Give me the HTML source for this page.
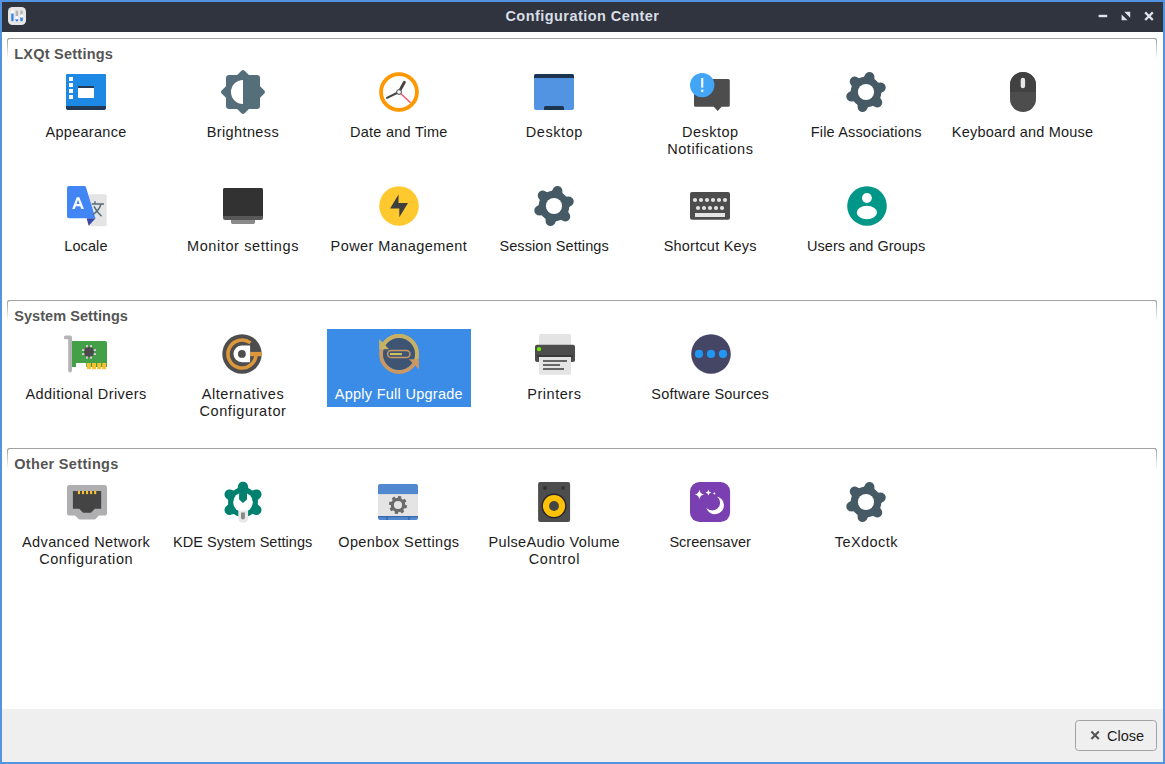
<!DOCTYPE html>
<html><head><meta charset="utf-8"><title>Configuration Center</title>
<style>
html,body{margin:0;padding:0}
body{width:1165px;height:764px;overflow:hidden;position:relative;background:#5294e2;font-family:"Liberation Sans",sans-serif;font-size:14.5px;color:#1c1c1c}
.tb{position:absolute;left:2px;top:2px;width:1161px;height:30px;background:#2f343f}
.tt{position:absolute;left:0;top:0;width:1161px;text-align:center;font-weight:bold;color:#d9dde4;line-height:29px;font-size:14.5px;white-space:nowrap}
.ct{position:absolute;left:2px;top:32px;width:1161px;height:677px;background:#fff}
.ft{position:absolute;left:2px;top:709px;width:1161px;height:53px;background:#efefef}
.gb{position:absolute;left:7px;width:1150px;height:24px;box-sizing:border-box;border-top:1px solid #a2a2a2;border-radius:3px 3px 0 0}
.gb:before,.gb:after{content:"";position:absolute;top:2px;width:1px;height:18px;background:linear-gradient(#a8a8a8,rgba(200,200,200,0))}
.gb:before{left:0}.gb:after{right:0}
.gc{position:absolute;width:3px;height:3px;box-sizing:border-box;top:-1px;border-top:1px solid #a2a2a2}
.gc.l{left:0;border-left:1px solid #a4a4a4;border-radius:3px 0 0 0}
.gc.r{right:0;border-right:1px solid #a4a4a4;border-radius:0 3px 0 0}
.hd{position:absolute;left:14.2px;font-weight:bold;color:#555;white-space:nowrap;line-height:17px;font-size:14.5px}
.lb{position:absolute;width:156px;text-align:center;line-height:17px;white-space:nowrap}
.lb span{display:block}
.sel{position:absolute;left:327px;top:329px;width:144px;height:78px;background:#3b8ce6}
.btn{position:absolute;left:1075px;top:720px;width:82px;height:31px;box-sizing:border-box;border:1px solid #a2a2a2;border-radius:3.5px;background:#efefef}
.bt{position:absolute;left:1107px;top:728px;line-height:17px;white-space:nowrap}
svg{position:absolute;left:0;top:0}
</style></head>
<body>
<div class="tb"><div class="tt" style="letter-spacing:0.45px;left:-0.07px">Configuration Center</div></div>
<div class="ct"></div><div class="ft"></div>
<div class="gb" style="top:38px"><i class="gc l"></i><i class="gc r"></i></div>
<div class="hd" style="top:46px;letter-spacing:0.24px">LXQt Settings</div>
<div class="gb" style="top:300px"><i class="gc l"></i><i class="gc r"></i></div>
<div class="hd" style="top:308px;letter-spacing:0.065px">System Settings</div>
<div class="gb" style="top:448px"><i class="gc l"></i><i class="gc r"></i></div>
<div class="hd" style="top:456px;letter-spacing:0.328px">Other Settings</div>
<div class="sel"></div>
<div class="lb" style="left:7.9px;top:124px"><span style="letter-spacing:0.3px;margin-left:0.3px">Appearance</span></div>
<div class="lb" style="left:164.7px;top:124px"><span style="letter-spacing:0.388px;margin-left:0.388px">Brightness</span></div>
<div class="lb" style="left:320.7px;top:124px"><span style="letter-spacing:0.261px;margin-left:0.261px">Date and Time</span></div>
<div class="lb" style="left:476.1px;top:124px"><span style="letter-spacing:0.585px;margin-left:0.585px">Desktop</span></div>
<div class="lb" style="left:632.1px;top:124px"><span style="letter-spacing:0.5px;margin-left:0.5px">Desktop</span><span style="letter-spacing:0.57px;margin-left:0.57px">Notifications</span></div>
<div class="lb" style="left:788.1px;top:124px"><span style="letter-spacing:0.165px;margin-left:0.165px">File Associations</span></div>
<div class="lb" style="left:944.5px;top:124px"><span style="letter-spacing:0.203px;margin-left:0.203px">Keyboard and Mouse</span></div>
<div class="lb" style="left:7.9px;top:238px"><span style="letter-spacing:0.111px;margin-left:0.111px">Locale</span></div>
<div class="lb" style="left:164.7px;top:238px"><span style="letter-spacing:0.609px;margin-left:0.609px">Monitor settings</span></div>
<div class="lb" style="left:320.7px;top:238px"><span style="letter-spacing:0.427px;margin-left:0.427px">Power Management</span></div>
<div class="lb" style="left:476.1px;top:238px"><span style="letter-spacing:0.087px;margin-left:0.087px">Session Settings</span></div>
<div class="lb" style="left:632.1px;top:238px"><span style="letter-spacing:0.218px;margin-left:0.218px">Shortcut Keys</span></div>
<div class="lb" style="left:788.1px;top:238px"><span style="letter-spacing:0.033px;margin-left:0.033px">Users and Groups</span></div>
<div class="lb" style="left:7.9px;top:386px"><span style="letter-spacing:0.42px;margin-left:0.42px">Additional Drivers</span></div>
<div class="lb" style="left:164.7px;top:386px"><span style="letter-spacing:0.57px;margin-left:0.57px">Alternatives</span><span style="letter-spacing:0.609px;margin-left:0.609px">Configurator</span></div>
<div class="lb" style="left:320.7px;top:386px;color:#fff"><span style="letter-spacing:0.271px;margin-left:0.271px">Apply Full Upgrade</span></div>
<div class="lb" style="left:476.1px;top:386px"><span style="letter-spacing:0.529px;margin-left:0.529px">Printers</span></div>
<div class="lb" style="left:632.1px;top:386px"><span style="letter-spacing:0.209px;margin-left:0.209px">Software Sources</span></div>
<div class="lb" style="left:7.9px;top:534px"><span style="letter-spacing:0.419px;margin-left:0.419px">Advanced Network</span><span style="letter-spacing:0.604px;margin-left:0.604px">Configuration</span></div>
<div class="lb" style="left:164.7px;top:534px"><span style="letter-spacing:0.031px;margin-left:0.031px">KDE System Settings</span></div>
<div class="lb" style="left:320.7px;top:534px"><span style="letter-spacing:0.37px;margin-left:0.37px">Openbox Settings</span></div>
<div class="lb" style="left:476.1px;top:534px"><span style="letter-spacing:0.332px;margin-left:0.332px">PulseAudio Volume</span><span style="letter-spacing:0.693px;margin-left:0.693px">Control</span></div>
<div class="lb" style="left:632.1px;top:534px"><span style="letter-spacing:-0.001px;margin-left:-0.001px">Screensaver</span></div>
<div class="lb" style="left:788.1px;top:534px"><span style="letter-spacing:0.443px;margin-left:0.443px">TeXdoctk</span></div>
<div class="btn"></div><div class="bt" style="letter-spacing:-0.016px">Close</div>
<svg width="1165" height="764" viewBox="0 0 1165 764">
<rect x="8" y="7" width="18" height="18" rx="4.6" fill="#e6e6e6"/>
<rect x="11.25" y="11" width="2.3" height="10.3" rx="1.1" fill="#3584e4"/><circle cx="12.4" cy="12" r="1.75" fill="#fff"/>
<rect x="15.75" y="10.4" width="2.3" height="10.9" rx="1.1" fill="#b4b4b4"/><rect x="15.75" y="18.6" width="2.3" height="2.7" rx="0.6" fill="#3584e4"/><circle cx="16.9" cy="17.7" r="1.75" fill="#fff"/>
<rect x="20.35" y="10.4" width="2.3" height="10.9" rx="1.1" fill="#b4b4b4"/><rect x="20.35" y="16.5" width="2.3" height="4.8" rx="0.8" fill="#3584e4"/><circle cx="21.5" cy="15.9" r="1.75" fill="#fff"/>
<rect x="1098.6" y="14.8" width="8.6" height="2.4" fill="#dfe3ea"/>
<path d="M1124.3 11.8 L1130.2 11.8 L1130.2 17.7 Z M1121.6 14.4 L1127.5 20.3 L1121.6 20.3 Z" fill="#dfe3ea"/>
<path d="M1145.2 12.4 L1152.8 20 M1152.8 12.4 L1145.2 20" stroke="#dfe3ea" stroke-width="2.3" fill="none"/>
<path d="M1091.4 731.6 L1098.8 739 M1098.8 731.6 L1091.4 739" stroke="#555" stroke-width="2.1" fill="none"/>
<rect x="66" y="74" width="40" height="36" rx="1.8" fill="#233a57"/>
<path d="M66 75.8 Q66 74 67.8 74 L104.2 74 Q106 74 106 75.8 L106 106 L66 106 Z" fill="#1e88e5"/>
<rect x="69" y="77" width="4" height="4" fill="#fff"/>
<rect x="69" y="83" width="4" height="4" fill="#fff"/>
<rect x="69" y="89" width="4" height="4" fill="#fff"/>
<rect x="69" y="95" width="4" height="4" fill="#fff"/>
<rect x="78" y="86" width="16" height="12" rx="0.7" fill="#fff"/><rect x="78" y="86" width="16" height="2" fill="#233a57"/>
<rect x="226" y="75" width="34" height="34" rx="3.2" fill="#546e7a"/>
<rect x="226.8" y="75.8" width="32.4" height="32.4" rx="2.6" fill="#546e7a" transform="rotate(45 243 92)"/>
<path d="M243 80 A12 12 0 0 0 243 104 Z" fill="#fff"/>
<circle cx="399" cy="92" r="17.95" fill="#fff" stroke="#ff9800" stroke-width="3.8"/>
<path d="M399 92 L404.4 82.2" stroke="#444" stroke-width="2.8" stroke-linecap="round"/>
<path d="M399 92 L387 97.9" stroke="#444" stroke-width="2" stroke-linecap="round"/>
<path d="M399 92 L410.6 102.7" stroke="#ff4458" stroke-width="1.2"/>
<circle cx="399" cy="92" r="2.4" fill="#fff" stroke="#444" stroke-width="1"/>
<rect x="534" y="74" width="40" height="36" rx="2" fill="#5294e2"/>
<path d="M534 76 Q534 74 536 74 L572 74 Q574 74 574 76 L574 78 L534 78 Z" fill="#1d344f"/>
<path d="M544 110 L544 107.6 Q544 106 545.6 106 L562.4 106 Q564 106 564 107.6 L564 110 Z" fill="#1d344f"/>
<path d="M695.5 79 L728.3 79 Q729.8 79 729.8 80.5 L729.8 105.3 Q729.8 106.8 728.3 106.8 L721.6 106.8 L717.7 110.9 L713.8 106.8 L695.5 106.8 Q694 106.8 694 105.3 L694 80.5 Q694 79 695.5 79 Z" fill="#4d4d4d"/>
<circle cx="702.2" cy="85.1" r="12.2" fill="#42a5f5"/>
<rect x="701.2" y="78" width="2.1" height="9.6" fill="#fff"/><rect x="701.2" y="89.6" width="2.1" height="2.3" fill="#fff"/>
<path d="M882.79 92.00 L882.31 92.28 L881.90 92.56 L881.60 92.82 L881.40 93.08 L881.28 93.34 L881.22 93.60 L881.19 93.86 L881.15 94.13 L881.11 94.39 L881.07 94.66 L881.02 94.92 L880.97 95.18 L880.91 95.44 L880.85 95.70 L880.78 95.96 L880.71 96.22 L880.63 96.47 L880.55 96.73 L880.47 96.98 L880.38 97.23 L880.32 97.50 L880.31 97.78 L880.38 98.10 L880.53 98.47 L880.79 98.90 L881.09 99.36 L881.39 99.84 L881.66 100.33 L881.89 100.81 L882.04 101.26 L882.14 101.70 L882.20 102.12 L882.22 102.53 L882.20 102.93 L882.15 103.31 L882.08 103.68 L881.98 104.04 L881.85 104.38 L881.70 104.72 L881.53 105.03 L881.34 105.33 L881.12 105.62 L880.89 105.89 L880.64 106.14 L880.37 106.37 L880.08 106.58 L879.78 106.78 L879.46 106.95 L879.13 107.10 L878.78 107.22 L878.41 107.33 L878.03 107.40 L877.64 107.44 L877.23 107.45 L876.80 107.43 L876.36 107.36 L875.89 107.24 L875.40 107.05 L874.90 106.81 L874.39 106.54 L873.91 106.27 L873.47 106.05 L873.09 105.92 L872.77 105.87 L872.48 105.90 L872.22 105.98 L871.98 106.08 L871.73 106.19 L871.48 106.28 L871.23 106.38 L870.98 106.47 L870.73 106.55 L870.47 106.63 L870.22 106.71 L869.96 106.78 L869.70 106.85 L869.44 106.91 L869.18 106.97 L868.92 107.02 L868.66 107.07 L868.40 107.15 L868.15 107.28 L867.90 107.50 L867.66 107.82 L867.42 108.25 L867.17 108.75 L866.90 109.25 L866.62 109.73 L866.32 110.16 L866.00 110.52 L865.67 110.83 L865.33 111.09 L864.99 111.31 L864.64 111.49 L864.28 111.64 L863.92 111.77 L863.56 111.86 L863.20 111.92 L862.84 111.96 L862.48 111.97 L862.12 111.95 L861.77 111.91 L861.42 111.84 L861.08 111.75 L860.74 111.63 L860.41 111.49 L860.09 111.32 L859.78 111.13 L859.49 110.92 L859.20 110.68 L858.93 110.41 L858.68 110.12 L858.45 109.80 L858.23 109.45 L858.04 109.07 L857.88 108.65 L857.75 108.19 L857.67 107.66 L857.63 107.11 L857.61 106.54 L857.60 105.99 L857.57 105.49 L857.49 105.10 L857.37 104.80 L857.20 104.56 L857.01 104.38 L856.79 104.22 L856.58 104.06 L856.37 103.89 L856.17 103.72 L855.96 103.55 L855.76 103.37 L855.57 103.19 L855.37 103.01 L855.18 102.82 L854.99 102.63 L854.81 102.43 L854.63 102.24 L854.45 102.04 L854.28 101.83 L854.08 101.65 L853.84 101.50 L853.53 101.40 L853.13 101.35 L852.63 101.36 L852.08 101.39 L851.51 101.41 L850.95 101.40 L850.43 101.36 L849.96 101.26 L849.53 101.13 L849.14 100.97 L848.77 100.78 L848.44 100.57 L848.13 100.33 L847.84 100.08 L847.58 99.82 L847.35 99.54 L847.14 99.24 L846.95 98.93 L846.78 98.62 L846.64 98.29 L846.53 97.95 L846.44 97.61 L846.37 97.26 L846.33 96.90 L846.31 96.55 L846.32 96.18 L846.36 95.82 L846.43 95.45 L846.52 95.08 L846.65 94.72 L846.81 94.36 L847.00 94.00 L847.24 93.64 L847.52 93.29 L847.86 92.95 L848.27 92.62 L848.73 92.30 L849.21 92.00 L849.69 91.72 L850.10 91.44 L850.40 91.18 L850.60 90.92 L850.72 90.66 L850.78 90.40 L850.81 90.14 L850.85 89.87 L850.89 89.61 L850.93 89.34 L850.98 89.08 L851.03 88.82 L851.09 88.56 L851.15 88.30 L851.22 88.04 L851.29 87.78 L851.37 87.53 L851.45 87.27 L851.53 87.02 L851.62 86.77 L851.68 86.50 L851.69 86.22 L851.62 85.90 L851.47 85.53 L851.21 85.10 L850.91 84.64 L850.61 84.16 L850.34 83.67 L850.11 83.19 L849.96 82.74 L849.86 82.30 L849.80 81.88 L849.78 81.47 L849.80 81.07 L849.85 80.69 L849.92 80.32 L850.02 79.96 L850.15 79.62 L850.30 79.28 L850.47 78.97 L850.66 78.67 L850.88 78.38 L851.11 78.11 L851.36 77.86 L851.63 77.63 L851.92 77.42 L852.22 77.22 L852.54 77.05 L852.87 76.90 L853.22 76.78 L853.59 76.67 L853.97 76.60 L854.36 76.56 L854.77 76.55 L855.20 76.57 L855.64 76.64 L856.11 76.76 L856.60 76.95 L857.10 77.19 L857.61 77.46 L858.09 77.73 L858.53 77.95 L858.91 78.08 L859.23 78.13 L859.52 78.10 L859.78 78.02 L860.02 77.92 L860.27 77.81 L860.52 77.72 L860.77 77.62 L861.02 77.53 L861.27 77.45 L861.53 77.37 L861.78 77.29 L862.04 77.22 L862.30 77.15 L862.56 77.09 L862.82 77.03 L863.08 76.98 L863.34 76.93 L863.60 76.85 L863.85 76.72 L864.10 76.50 L864.34 76.18 L864.58 75.75 L864.83 75.25 L865.10 74.75 L865.38 74.27 L865.68 73.84 L866.00 73.48 L866.33 73.17 L866.67 72.91 L867.01 72.69 L867.36 72.51 L867.72 72.36 L868.08 72.23 L868.44 72.14 L868.80 72.08 L869.16 72.04 L869.52 72.03 L869.88 72.05 L870.23 72.09 L870.58 72.16 L870.92 72.25 L871.26 72.37 L871.59 72.51 L871.91 72.68 L872.22 72.87 L872.51 73.08 L872.80 73.32 L873.07 73.59 L873.32 73.88 L873.55 74.20 L873.77 74.55 L873.96 74.93 L874.12 75.35 L874.25 75.81 L874.33 76.34 L874.37 76.89 L874.39 77.46 L874.40 78.01 L874.43 78.51 L874.51 78.90 L874.63 79.20 L874.80 79.44 L874.99 79.62 L875.21 79.78 L875.42 79.94 L875.63 80.11 L875.83 80.28 L876.04 80.45 L876.24 80.63 L876.43 80.81 L876.63 80.99 L876.82 81.18 L877.01 81.37 L877.19 81.57 L877.37 81.76 L877.55 81.96 L877.72 82.17 L877.92 82.35 L878.16 82.50 L878.47 82.60 L878.87 82.65 L879.37 82.64 L879.92 82.61 L880.49 82.59 L881.05 82.60 L881.57 82.64 L882.04 82.74 L882.47 82.87 L882.86 83.03 L883.23 83.22 L883.56 83.43 L883.87 83.67 L884.16 83.92 L884.42 84.18 L884.65 84.46 L884.86 84.76 L885.05 85.07 L885.22 85.38 L885.36 85.71 L885.47 86.05 L885.56 86.39 L885.63 86.74 L885.67 87.10 L885.69 87.45 L885.68 87.82 L885.64 88.18 L885.57 88.55 L885.48 88.92 L885.35 89.28 L885.19 89.64 L885.00 90.00 L884.76 90.36 L884.48 90.71 L884.14 91.05 L883.73 91.38 L883.27 91.70Z" fill="#455a64"/><circle cx="866" cy="92" r="8.1" fill="#fff"/>
<path d="M570.79 206.00 L570.31 206.28 L569.90 206.56 L569.60 206.82 L569.40 207.08 L569.28 207.34 L569.22 207.60 L569.19 207.86 L569.15 208.13 L569.11 208.39 L569.07 208.66 L569.02 208.92 L568.97 209.18 L568.91 209.44 L568.85 209.70 L568.78 209.96 L568.71 210.22 L568.63 210.47 L568.55 210.73 L568.47 210.98 L568.38 211.23 L568.32 211.50 L568.31 211.78 L568.38 212.10 L568.53 212.47 L568.79 212.90 L569.09 213.36 L569.39 213.84 L569.66 214.33 L569.89 214.81 L570.04 215.26 L570.14 215.70 L570.20 216.12 L570.22 216.53 L570.20 216.93 L570.15 217.31 L570.08 217.68 L569.98 218.04 L569.85 218.38 L569.70 218.72 L569.53 219.03 L569.34 219.33 L569.12 219.62 L568.89 219.89 L568.64 220.14 L568.37 220.37 L568.08 220.58 L567.78 220.78 L567.46 220.95 L567.13 221.10 L566.78 221.22 L566.41 221.33 L566.03 221.40 L565.64 221.44 L565.23 221.45 L564.80 221.43 L564.36 221.36 L563.89 221.24 L563.40 221.05 L562.90 220.81 L562.39 220.54 L561.91 220.27 L561.47 220.05 L561.09 219.92 L560.77 219.87 L560.48 219.90 L560.22 219.98 L559.98 220.08 L559.73 220.19 L559.48 220.28 L559.23 220.38 L558.98 220.47 L558.73 220.55 L558.47 220.63 L558.22 220.71 L557.96 220.78 L557.70 220.85 L557.44 220.91 L557.18 220.97 L556.92 221.02 L556.66 221.07 L556.40 221.15 L556.15 221.28 L555.90 221.50 L555.66 221.82 L555.42 222.25 L555.17 222.75 L554.90 223.25 L554.62 223.73 L554.32 224.16 L554.00 224.52 L553.67 224.83 L553.33 225.09 L552.99 225.31 L552.64 225.49 L552.28 225.64 L551.92 225.77 L551.56 225.86 L551.20 225.92 L550.84 225.96 L550.48 225.97 L550.12 225.95 L549.77 225.91 L549.42 225.84 L549.08 225.75 L548.74 225.63 L548.41 225.49 L548.09 225.32 L547.78 225.13 L547.49 224.92 L547.20 224.68 L546.93 224.41 L546.68 224.12 L546.45 223.80 L546.23 223.45 L546.04 223.07 L545.88 222.65 L545.75 222.19 L545.67 221.66 L545.63 221.11 L545.61 220.54 L545.60 219.99 L545.57 219.49 L545.49 219.10 L545.37 218.80 L545.20 218.56 L545.01 218.38 L544.79 218.22 L544.58 218.06 L544.37 217.89 L544.17 217.72 L543.96 217.55 L543.76 217.37 L543.57 217.19 L543.37 217.01 L543.18 216.82 L542.99 216.63 L542.81 216.43 L542.63 216.24 L542.45 216.04 L542.28 215.83 L542.08 215.65 L541.84 215.50 L541.53 215.40 L541.13 215.35 L540.63 215.36 L540.08 215.39 L539.51 215.41 L538.95 215.40 L538.43 215.36 L537.96 215.26 L537.53 215.13 L537.14 214.97 L536.77 214.78 L536.44 214.57 L536.13 214.33 L535.84 214.08 L535.58 213.82 L535.35 213.54 L535.14 213.24 L534.95 212.93 L534.78 212.62 L534.64 212.29 L534.53 211.95 L534.44 211.61 L534.37 211.26 L534.33 210.90 L534.31 210.55 L534.32 210.18 L534.36 209.82 L534.43 209.45 L534.52 209.08 L534.65 208.72 L534.81 208.36 L535.00 208.00 L535.24 207.64 L535.52 207.29 L535.86 206.95 L536.27 206.62 L536.73 206.30 L537.21 206.00 L537.69 205.72 L538.10 205.44 L538.40 205.18 L538.60 204.92 L538.72 204.66 L538.78 204.40 L538.81 204.14 L538.85 203.87 L538.89 203.61 L538.93 203.34 L538.98 203.08 L539.03 202.82 L539.09 202.56 L539.15 202.30 L539.22 202.04 L539.29 201.78 L539.37 201.53 L539.45 201.27 L539.53 201.02 L539.62 200.77 L539.68 200.50 L539.69 200.22 L539.62 199.90 L539.47 199.53 L539.21 199.10 L538.91 198.64 L538.61 198.16 L538.34 197.67 L538.11 197.19 L537.96 196.74 L537.86 196.30 L537.80 195.88 L537.78 195.47 L537.80 195.07 L537.85 194.69 L537.92 194.32 L538.02 193.96 L538.15 193.62 L538.30 193.28 L538.47 192.97 L538.66 192.67 L538.88 192.38 L539.11 192.11 L539.36 191.86 L539.63 191.63 L539.92 191.42 L540.22 191.22 L540.54 191.05 L540.87 190.90 L541.22 190.78 L541.59 190.67 L541.97 190.60 L542.36 190.56 L542.77 190.55 L543.20 190.57 L543.64 190.64 L544.11 190.76 L544.60 190.95 L545.10 191.19 L545.61 191.46 L546.09 191.73 L546.53 191.95 L546.91 192.08 L547.23 192.13 L547.52 192.10 L547.78 192.02 L548.02 191.92 L548.27 191.81 L548.52 191.72 L548.77 191.62 L549.02 191.53 L549.27 191.45 L549.53 191.37 L549.78 191.29 L550.04 191.22 L550.30 191.15 L550.56 191.09 L550.82 191.03 L551.08 190.98 L551.34 190.93 L551.60 190.85 L551.85 190.72 L552.10 190.50 L552.34 190.18 L552.58 189.75 L552.83 189.25 L553.10 188.75 L553.38 188.27 L553.68 187.84 L554.00 187.48 L554.33 187.17 L554.67 186.91 L555.01 186.69 L555.36 186.51 L555.72 186.36 L556.08 186.23 L556.44 186.14 L556.80 186.08 L557.16 186.04 L557.52 186.03 L557.88 186.05 L558.23 186.09 L558.58 186.16 L558.92 186.25 L559.26 186.37 L559.59 186.51 L559.91 186.68 L560.22 186.87 L560.51 187.08 L560.80 187.32 L561.07 187.59 L561.32 187.88 L561.55 188.20 L561.77 188.55 L561.96 188.93 L562.12 189.35 L562.25 189.81 L562.33 190.34 L562.37 190.89 L562.39 191.46 L562.40 192.01 L562.43 192.51 L562.51 192.90 L562.63 193.20 L562.80 193.44 L562.99 193.62 L563.21 193.78 L563.42 193.94 L563.63 194.11 L563.83 194.28 L564.04 194.45 L564.24 194.63 L564.43 194.81 L564.63 194.99 L564.82 195.18 L565.01 195.37 L565.19 195.57 L565.37 195.76 L565.55 195.96 L565.72 196.17 L565.92 196.35 L566.16 196.50 L566.47 196.60 L566.87 196.65 L567.37 196.64 L567.92 196.61 L568.49 196.59 L569.05 196.60 L569.57 196.64 L570.04 196.74 L570.47 196.87 L570.86 197.03 L571.23 197.22 L571.56 197.43 L571.87 197.67 L572.16 197.92 L572.42 198.18 L572.65 198.46 L572.86 198.76 L573.05 199.07 L573.22 199.38 L573.36 199.71 L573.47 200.05 L573.56 200.39 L573.63 200.74 L573.67 201.10 L573.69 201.45 L573.68 201.82 L573.64 202.18 L573.57 202.55 L573.48 202.92 L573.35 203.28 L573.19 203.64 L573.00 204.00 L572.76 204.36 L572.48 204.71 L572.14 205.05 L571.73 205.38 L571.27 205.70Z" fill="#455a64"/><circle cx="554" cy="206" r="8.1" fill="#fff"/>
<path d="M882.79 502.00 L882.31 502.28 L881.90 502.56 L881.60 502.82 L881.40 503.08 L881.28 503.34 L881.22 503.60 L881.19 503.86 L881.15 504.13 L881.11 504.39 L881.07 504.66 L881.02 504.92 L880.97 505.18 L880.91 505.44 L880.85 505.70 L880.78 505.96 L880.71 506.22 L880.63 506.47 L880.55 506.73 L880.47 506.98 L880.38 507.23 L880.32 507.50 L880.31 507.78 L880.38 508.10 L880.53 508.47 L880.79 508.90 L881.09 509.36 L881.39 509.84 L881.66 510.33 L881.89 510.81 L882.04 511.26 L882.14 511.70 L882.20 512.12 L882.22 512.53 L882.20 512.93 L882.15 513.31 L882.08 513.68 L881.98 514.04 L881.85 514.38 L881.70 514.72 L881.53 515.03 L881.34 515.33 L881.12 515.62 L880.89 515.89 L880.64 516.14 L880.37 516.37 L880.08 516.58 L879.78 516.78 L879.46 516.95 L879.13 517.10 L878.78 517.22 L878.41 517.33 L878.03 517.40 L877.64 517.44 L877.23 517.45 L876.80 517.43 L876.36 517.36 L875.89 517.24 L875.40 517.05 L874.90 516.81 L874.39 516.54 L873.91 516.27 L873.47 516.05 L873.09 515.92 L872.77 515.87 L872.48 515.90 L872.22 515.98 L871.98 516.08 L871.73 516.19 L871.48 516.28 L871.23 516.38 L870.98 516.47 L870.73 516.55 L870.47 516.63 L870.22 516.71 L869.96 516.78 L869.70 516.85 L869.44 516.91 L869.18 516.97 L868.92 517.02 L868.66 517.07 L868.40 517.15 L868.15 517.28 L867.90 517.50 L867.66 517.82 L867.42 518.25 L867.17 518.75 L866.90 519.25 L866.62 519.73 L866.32 520.16 L866.00 520.52 L865.67 520.83 L865.33 521.09 L864.99 521.31 L864.64 521.49 L864.28 521.64 L863.92 521.77 L863.56 521.86 L863.20 521.92 L862.84 521.96 L862.48 521.97 L862.12 521.95 L861.77 521.91 L861.42 521.84 L861.08 521.75 L860.74 521.63 L860.41 521.49 L860.09 521.32 L859.78 521.13 L859.49 520.92 L859.20 520.68 L858.93 520.41 L858.68 520.12 L858.45 519.80 L858.23 519.45 L858.04 519.07 L857.88 518.65 L857.75 518.19 L857.67 517.66 L857.63 517.11 L857.61 516.54 L857.60 515.99 L857.57 515.49 L857.49 515.10 L857.37 514.80 L857.20 514.56 L857.01 514.38 L856.79 514.22 L856.58 514.06 L856.37 513.89 L856.17 513.72 L855.96 513.55 L855.76 513.37 L855.57 513.19 L855.37 513.01 L855.18 512.82 L854.99 512.63 L854.81 512.43 L854.63 512.24 L854.45 512.04 L854.28 511.83 L854.08 511.65 L853.84 511.50 L853.53 511.40 L853.13 511.35 L852.63 511.36 L852.08 511.39 L851.51 511.41 L850.95 511.40 L850.43 511.36 L849.96 511.26 L849.53 511.13 L849.14 510.97 L848.77 510.78 L848.44 510.57 L848.13 510.33 L847.84 510.08 L847.58 509.82 L847.35 509.54 L847.14 509.24 L846.95 508.93 L846.78 508.62 L846.64 508.29 L846.53 507.95 L846.44 507.61 L846.37 507.26 L846.33 506.90 L846.31 506.55 L846.32 506.18 L846.36 505.82 L846.43 505.45 L846.52 505.08 L846.65 504.72 L846.81 504.36 L847.00 504.00 L847.24 503.64 L847.52 503.29 L847.86 502.95 L848.27 502.62 L848.73 502.30 L849.21 502.00 L849.69 501.72 L850.10 501.44 L850.40 501.18 L850.60 500.92 L850.72 500.66 L850.78 500.40 L850.81 500.14 L850.85 499.87 L850.89 499.61 L850.93 499.34 L850.98 499.08 L851.03 498.82 L851.09 498.56 L851.15 498.30 L851.22 498.04 L851.29 497.78 L851.37 497.53 L851.45 497.27 L851.53 497.02 L851.62 496.77 L851.68 496.50 L851.69 496.22 L851.62 495.90 L851.47 495.53 L851.21 495.10 L850.91 494.64 L850.61 494.16 L850.34 493.67 L850.11 493.19 L849.96 492.74 L849.86 492.30 L849.80 491.88 L849.78 491.47 L849.80 491.07 L849.85 490.69 L849.92 490.32 L850.02 489.96 L850.15 489.62 L850.30 489.28 L850.47 488.97 L850.66 488.67 L850.88 488.38 L851.11 488.11 L851.36 487.86 L851.63 487.63 L851.92 487.42 L852.22 487.22 L852.54 487.05 L852.87 486.90 L853.22 486.78 L853.59 486.67 L853.97 486.60 L854.36 486.56 L854.77 486.55 L855.20 486.57 L855.64 486.64 L856.11 486.76 L856.60 486.95 L857.10 487.19 L857.61 487.46 L858.09 487.73 L858.53 487.95 L858.91 488.08 L859.23 488.13 L859.52 488.10 L859.78 488.02 L860.02 487.92 L860.27 487.81 L860.52 487.72 L860.77 487.62 L861.02 487.53 L861.27 487.45 L861.53 487.37 L861.78 487.29 L862.04 487.22 L862.30 487.15 L862.56 487.09 L862.82 487.03 L863.08 486.98 L863.34 486.93 L863.60 486.85 L863.85 486.72 L864.10 486.50 L864.34 486.18 L864.58 485.75 L864.83 485.25 L865.10 484.75 L865.38 484.27 L865.68 483.84 L866.00 483.48 L866.33 483.17 L866.67 482.91 L867.01 482.69 L867.36 482.51 L867.72 482.36 L868.08 482.23 L868.44 482.14 L868.80 482.08 L869.16 482.04 L869.52 482.03 L869.88 482.05 L870.23 482.09 L870.58 482.16 L870.92 482.25 L871.26 482.37 L871.59 482.51 L871.91 482.68 L872.22 482.87 L872.51 483.08 L872.80 483.32 L873.07 483.59 L873.32 483.88 L873.55 484.20 L873.77 484.55 L873.96 484.93 L874.12 485.35 L874.25 485.81 L874.33 486.34 L874.37 486.89 L874.39 487.46 L874.40 488.01 L874.43 488.51 L874.51 488.90 L874.63 489.20 L874.80 489.44 L874.99 489.62 L875.21 489.78 L875.42 489.94 L875.63 490.11 L875.83 490.28 L876.04 490.45 L876.24 490.63 L876.43 490.81 L876.63 490.99 L876.82 491.18 L877.01 491.37 L877.19 491.57 L877.37 491.76 L877.55 491.96 L877.72 492.17 L877.92 492.35 L878.16 492.50 L878.47 492.60 L878.87 492.65 L879.37 492.64 L879.92 492.61 L880.49 492.59 L881.05 492.60 L881.57 492.64 L882.04 492.74 L882.47 492.87 L882.86 493.03 L883.23 493.22 L883.56 493.43 L883.87 493.67 L884.16 493.92 L884.42 494.18 L884.65 494.46 L884.86 494.76 L885.05 495.07 L885.22 495.38 L885.36 495.71 L885.47 496.05 L885.56 496.39 L885.63 496.74 L885.67 497.10 L885.69 497.45 L885.68 497.82 L885.64 498.18 L885.57 498.55 L885.48 498.92 L885.35 499.28 L885.19 499.64 L885.00 500.00 L884.76 500.36 L884.48 500.71 L884.14 501.05 L883.73 501.38 L883.27 501.70Z" fill="#455a64"/><circle cx="866" cy="502" r="8.1" fill="#fff"/>
<path d="M1010 85 A13 13 0 0 1 1036 85 L1036 99 A13 13 0 0 1 1010 99 Z" fill="#4d4d4d"/>
<path d="M1010 92 L1010 85 A13 13 0 0 1 1036 85 L1036 92 Z" fill="#414141"/>
<rect x="1020.7" y="77.8" width="4.4" height="10.5" rx="2.2" fill="#e6e6e6"/>
<rect x="88.2" y="194.2" width="18.5" height="32.1" rx="1.8" fill="#e4e4e4"/>
<path d="M86.6 218.2 L95.6 218.2 L88.7 225.7 Z" fill="#3949ab"/>
<path d="M69 186 L84.4 186 Q85.6 186 85.9 187.1 L95.4 218.3 L69 218.3 Q67 218.3 67 216.3 L67 188 Q67 186 69 186 Z" fill="#4285f4"/>
<path d="M72.2 209 L76.8 197.3 L79.3 197.3 L83.9 209 L81.3 209 L80.3 206.2 L75.8 206.2 L74.8 209 Z M76.5 204.1 L79.6 204.1 L78.05 199.8 Z" fill="#fff"/>
<path d="M91.7 203.9 L104 203.9 M95 201.2 L95 203.9 M101 204 Q99.5 210 92.8 214.6 M94 206.4 Q96.5 211.5 101.5 216.2" stroke="#546e7a" stroke-width="1.5" fill="none"/>
<rect x="231" y="218" width="24" height="6" rx="1.4" fill="#8a8a8a"/>
<rect x="223" y="188" width="40" height="32" rx="2" fill="#585858"/>
<path d="M223 190 Q223 188 225 188 L261 188 Q263 188 263 190 L263 216 L223 216 Z" fill="#323232"/>
<circle cx="399" cy="206" r="19.8" fill="#fdc92e"/>
<path d="M398.5 194.4 L398.5 203.1 L408 203.1 L399.3 217.3 L399.3 208.6 L390.1 208.6 Z" fill="#3f3f3f"/>
<rect x="690" y="192" width="40" height="27.8" rx="2" fill="#4d4d4d"/>
<circle cx="695" cy="200" r="2.1" fill="#e4e4e4"/>
<circle cx="701" cy="200" r="2.1" fill="#e4e4e4"/>
<circle cx="707" cy="200" r="2.1" fill="#e4e4e4"/>
<circle cx="713" cy="200" r="2.1" fill="#e4e4e4"/>
<circle cx="719" cy="200" r="2.1" fill="#e4e4e4"/>
<circle cx="725" cy="200" r="2.1" fill="#e4e4e4"/>
<circle cx="698" cy="208" r="2.1" fill="#e4e4e4"/>
<circle cx="704" cy="208" r="2.1" fill="#e4e4e4"/>
<circle cx="710" cy="208" r="2.1" fill="#e4e4e4"/>
<circle cx="716" cy="208" r="2.1" fill="#e4e4e4"/>
<circle cx="722" cy="208" r="2.1" fill="#e4e4e4"/>
<rect x="695" y="213" width="30" height="4" fill="#e4e4e4"/>
<circle cx="867" cy="206" r="19.8" fill="#009688"/>
<circle cx="866.9" cy="198" r="4.9" fill="#fff"/>
<ellipse cx="866.9" cy="212.5" rx="10.1" ry="6.7" fill="#fff"/>
<path d="M72 341 L105.2 341 Q107 341 107 342.8 L107 367 L86.2 367 L86.2 363 L76 363 L76 367 L72 367 Z" fill="#43a047"/>
<rect x="87" y="363" width="3.9" height="6.2" fill="#fbc02d"/>
<rect x="92.1" y="363" width="3.9" height="6.2" fill="#fbc02d"/>
<rect x="97.2" y="363" width="3.9" height="6.2" fill="#fbc02d"/>
<rect x="102.2" y="363" width="3.9" height="6.2" fill="#fbc02d"/>
<path d="M65.8 337.4 L70.1 337.4 L70.1 370.6" stroke="#b4b4b4" stroke-width="3.8" fill="none" stroke-linecap="round" stroke-linejoin="round"/>
<path d="M86.3 347 L91.7 347 L93.9 349.2 L93.9 354.6 L91.7 356.8 L86.3 356.8 L84.1 354.6 L84.1 349.2 Z" fill="#4a4a4a"/>
<rect x="86" y="345" width="1.8" height="2.4" fill="#d6cdd6"/>
<rect x="90.2" y="345" width="1.8" height="2.4" fill="#d6cdd6"/>
<rect x="86" y="356.4" width="1.8" height="2.4" fill="#d6cdd6"/>
<rect x="90.2" y="356.4" width="1.8" height="2.4" fill="#d6cdd6"/>
<rect x="82" y="349.2" width="2.4" height="1.8" fill="#d6cdd6"/>
<rect x="82" y="353.2" width="2.4" height="1.8" fill="#d6cdd6"/>
<rect x="93.6" y="349.2" width="2.4" height="1.8" fill="#d6cdd6"/>
<rect x="93.6" y="353.2" width="2.4" height="1.8" fill="#d6cdd6"/>
<circle cx="242" cy="354" r="19.7" fill="#4d4d4d"/>
<path d="M250.5 342.9 A14 14 0 1 0 256 354" stroke="#dc973c" stroke-width="3.6" fill="none"/>
<rect x="250.1" y="351.9" width="11.6" height="4.3" fill="#dc973c"/>
<path d="M241.9 345.5 L250.1 345.5 L250.1 362.3 L241.9 362.3 A8.4 8.4 0 0 1 241.9 345.5 Z" fill="#fff"/>
<circle cx="241.9" cy="353.9" r="3.9" fill="#4d4d4d"/>
<path d="M539 345.5 L539 335.8 Q539 334 540.8 334 L569.2 334 Q571 334 571 335.8 L571 345.5 Z" fill="#e4e4e4"/>
<rect x="535" y="344.8" width="40" height="17.3" rx="2" fill="#4d4d4d"/>
<rect x="537" y="355" width="36" height="2.2" fill="#3a3a3a"/>
<path d="M539 357 L571 357 L571 372.9 Q571 374.7 569.2 374.7 L540.8 374.7 Q539 374.7 539 372.9 Z" fill="#e4e4e4"/>
<rect x="543" y="360" width="24" height="2" fill="#666"/><rect x="543" y="364" width="17" height="2" fill="#666"/><rect x="543" y="368" width="21" height="2" fill="#666"/>
<circle cx="539" cy="349.1" r="2.2" fill="#6fe80f"/>
<circle cx="711" cy="354" r="19.8" fill="#454566"/>
<circle cx="699" cy="353.9" r="4.1" fill="#2196f3"/>
<circle cx="711" cy="353.9" r="4.1" fill="#2196f3"/>
<circle cx="723" cy="353.9" r="4.1" fill="#2196f3"/>
<path d="M69.5 485 L104.5 485 Q107 485 107 487.5 L107 513 Q107 515.6 104.5 515.6 L99 515.6 L95.5 519 Q94.9 519.6 94 519.6 L80 519.6 Q79.2 519.6 78.6 519 L75 515.6 L69.5 515.6 Q67 515.6 67 513 L67 487.5 Q67 485 69.5 485 Z" fill="#afafb2"/>
<path d="M72.9 491 L101.2 491 L101.2 508.8 L94.9 508.8 L91 512.7 L83.1 512.7 L79.2 508.8 L72.9 508.8 Z" fill="#444"/>
<rect x="77.9" y="491" width="2.1" height="3.1" fill="#fbc02d"/>
<rect x="81.95" y="491" width="2.1" height="3.1" fill="#fbc02d"/>
<rect x="86" y="491" width="2.1" height="3.1" fill="#fbc02d"/>
<rect x="90.05" y="491" width="2.1" height="3.1" fill="#fbc02d"/>
<rect x="94.1" y="491" width="2.1" height="3.1" fill="#fbc02d"/>
<path d="M257.90 502.20 L257.90 502.46 L257.89 502.72 L257.88 502.98 L257.86 503.24 L257.84 503.50 L257.82 503.76 L257.81 504.02 L257.86 504.29 L257.99 504.57 L258.23 504.89 L258.58 505.23 L259.04 505.61 L259.51 506.01 L259.96 506.43 L260.36 506.85 L260.68 507.27 L260.92 507.68 L261.11 508.09 L261.26 508.49 L261.36 508.88 L261.43 509.28 L261.47 509.66 L261.48 510.04 L261.46 510.42 L261.41 510.79 L261.34 511.15 L261.24 511.50 L261.12 511.83 L260.98 512.16 L260.81 512.48 L260.62 512.79 L260.40 513.08 L260.17 513.35 L259.92 513.61 L259.64 513.85 L259.35 514.08 L259.03 514.28 L258.70 514.47 L258.35 514.63 L257.97 514.76 L257.57 514.87 L257.15 514.94 L256.71 514.98 L256.23 514.98 L255.71 514.91 L255.14 514.77 L254.56 514.59 L253.97 514.38 L253.42 514.18 L252.94 514.04 L252.55 513.99 L252.24 514.02 L251.98 514.12 L251.76 514.25 L251.55 514.41 L251.33 514.55 L251.12 514.70 L250.90 514.84 L250.67 514.97 L250.45 515.10 L250.22 515.23 L250.00 515.36 L249.76 515.48 L249.53 515.59 L249.30 515.70 L249.06 515.81 L248.82 515.92 L248.58 516.02 L248.34 516.11 L248.10 516.20 L247.85 516.29 L247.60 516.37 L247.36 516.45 L247.11 516.52 L246.86 516.59 L246.60 516.66 L246.35 516.72 L246.10 516.77 L245.84 516.83 L245.59 516.87 L245.33 516.92 L245.07 516.95 L244.82 516.99 L244.56 517.02 L244.30 517.04 L244.04 517.06 L243.78 517.08 L243.52 517.09 L243.26 517.10 L243.00 517.10 L242.74 517.10 L242.48 517.09 L242.22 517.08 L241.96 517.06 L241.70 517.04 L241.44 517.02 L241.18 516.99 L240.93 516.95 L240.67 516.92 L240.41 516.87 L240.16 516.83 L239.90 516.77 L239.65 516.72 L239.40 516.66 L239.14 516.59 L238.89 516.52 L238.64 516.45 L238.40 516.37 L238.15 516.29 L237.90 516.20 L237.66 516.11 L237.42 516.02 L237.18 515.92 L236.94 515.81 L236.70 515.70 L236.47 515.59 L236.24 515.48 L236.00 515.36 L235.78 515.23 L235.55 515.10 L235.33 514.97 L235.10 514.84 L234.88 514.70 L234.67 514.55 L234.45 514.41 L234.24 514.25 L234.02 514.12 L233.76 514.02 L233.45 513.99 L233.06 514.04 L232.58 514.18 L232.03 514.38 L231.44 514.59 L230.86 514.77 L230.29 514.91 L229.77 514.98 L229.29 514.98 L228.85 514.94 L228.43 514.87 L228.03 514.76 L227.65 514.63 L227.30 514.47 L226.97 514.28 L226.65 514.08 L226.36 513.85 L226.08 513.61 L225.83 513.35 L225.60 513.08 L225.38 512.79 L225.19 512.48 L225.02 512.16 L224.88 511.83 L224.76 511.50 L224.66 511.15 L224.59 510.79 L224.54 510.42 L224.52 510.04 L224.53 509.66 L224.57 509.28 L224.64 508.88 L224.74 508.49 L224.89 508.09 L225.08 507.68 L225.32 507.27 L225.64 506.85 L226.04 506.43 L226.49 506.01 L226.96 505.61 L227.42 505.23 L227.77 504.89 L228.01 504.57 L228.14 504.29 L228.19 504.02 L228.18 503.76 L228.16 503.50 L228.14 503.24 L228.12 502.98 L228.11 502.72 L228.10 502.46 L228.10 502.20 L228.10 501.94 L228.11 501.68 L228.12 501.42 L228.14 501.16 L228.16 500.90 L228.18 500.64 L228.19 500.38 L228.14 500.11 L228.01 499.83 L227.77 499.51 L227.42 499.17 L226.96 498.79 L226.49 498.39 L226.04 497.97 L225.64 497.55 L225.32 497.13 L225.08 496.72 L224.89 496.31 L224.74 495.91 L224.64 495.52 L224.57 495.12 L224.53 494.74 L224.52 494.36 L224.54 493.98 L224.59 493.61 L224.66 493.25 L224.76 492.90 L224.88 492.57 L225.02 492.24 L225.19 491.92 L225.38 491.61 L225.60 491.32 L225.83 491.05 L226.08 490.79 L226.36 490.55 L226.65 490.32 L226.97 490.12 L227.30 489.93 L227.65 489.77 L228.03 489.64 L228.43 489.53 L228.85 489.46 L229.29 489.42 L229.77 489.42 L230.29 489.49 L230.86 489.63 L231.44 489.81 L232.03 490.02 L232.58 490.22 L233.06 490.36 L233.45 490.41 L233.76 490.38 L234.02 490.28 L234.24 490.15 L234.45 489.99 L234.67 489.85 L234.88 489.70 L235.10 489.56 L235.33 489.43 L235.55 489.30 L235.78 489.17 L236.00 489.04 L236.24 488.92 L236.47 488.81 L236.70 488.70 L236.94 488.59 L237.17 488.47 L237.38 488.29 L237.56 488.03 L237.71 487.67 L237.83 487.19 L237.93 486.61 L238.05 486.00 L238.18 485.40 L238.35 484.84 L238.55 484.35 L238.78 483.94 L239.04 483.57 L239.32 483.25 L239.61 482.96 L239.91 482.70 L240.23 482.47 L240.55 482.27 L240.89 482.10 L241.23 481.96 L241.58 481.84 L241.93 481.75 L242.28 481.69 L242.64 481.65 L243.00 481.64 L243.36 481.65 L243.72 481.69 L244.07 481.75 L244.42 481.84 L244.77 481.96 L245.11 482.10 L245.45 482.27 L245.77 482.47 L246.09 482.70 L246.39 482.96 L246.68 483.25 L246.96 483.57 L247.22 483.94 L247.45 484.35 L247.65 484.84 L247.82 485.40 L247.95 486.00 L248.07 486.61 L248.17 487.19 L248.29 487.67 L248.44 488.03 L248.62 488.29 L248.83 488.47 L249.06 488.59 L249.30 488.70 L249.53 488.81 L249.76 488.92 L250.00 489.04 L250.22 489.17 L250.45 489.30 L250.67 489.43 L250.90 489.56 L251.12 489.70 L251.33 489.85 L251.55 489.99 L251.76 490.15 L251.98 490.28 L252.24 490.38 L252.55 490.41 L252.94 490.36 L253.42 490.22 L253.97 490.02 L254.56 489.81 L255.14 489.63 L255.71 489.49 L256.23 489.42 L256.71 489.42 L257.15 489.46 L257.57 489.53 L257.97 489.64 L258.35 489.77 L258.70 489.93 L259.03 490.12 L259.35 490.32 L259.64 490.55 L259.92 490.79 L260.17 491.05 L260.40 491.32 L260.62 491.61 L260.81 491.92 L260.98 492.24 L261.12 492.57 L261.24 492.90 L261.34 493.25 L261.41 493.61 L261.46 493.98 L261.48 494.36 L261.47 494.74 L261.43 495.12 L261.36 495.52 L261.26 495.91 L261.11 496.31 L260.92 496.72 L260.68 497.13 L260.36 497.55 L259.96 497.97 L259.51 498.39 L259.04 498.79 L258.58 499.17 L258.23 499.51 L257.99 499.83 L257.86 500.11 L257.81 500.38 L257.82 500.64 L257.84 500.90 L257.86 501.16 L257.88 501.42 L257.89 501.68 L257.90 501.94Z" fill="#00806f"/>
<circle cx="243" cy="502.2" r="9.8" fill="#fff"/>
<path d="M239.1 489 L247 489 L247 499.6 L243 502.9 L239.1 499.6 Z" fill="#00806f"/>
<path d="M238.3 510.4 L248.1 510.4 L248.1 518 Q248.1 522.7 243.2 522.7 Q238.3 522.7 238.3 518 Z" fill="#e9e9e9"/>
<path d="M241 512.4 L244.9 512.4 L244.9 517.6 Q244.9 519.6 242.95 519.6 Q241 519.6 241 517.6 Z" fill="#888"/>
<rect x="378" y="484" width="40" height="36" rx="2" fill="#5288cf"/>
<rect x="378" y="494.1" width="40" height="22" fill="#e4e4e4"/>
<rect x="378" y="516" width="40" height="1.2" fill="#3768ad"/>
<rect x="386.2" y="516" width="1.6" height="4" fill="#3768ad"/><rect x="408.1" y="516" width="1.6" height="4" fill="#3768ad"/>
<path d="M405.19 504.64 L407.19 505.41 L406.56 508.36 L404.42 508.25 L403.34 509.83 L404.21 511.79 L401.68 513.43 L400.24 511.84 L398.36 512.19 L397.59 514.19 L394.64 513.56 L394.75 511.42 L393.17 510.34 L391.21 511.21 L389.57 508.68 L391.16 507.24 L390.81 505.36 L388.81 504.59 L389.44 501.64 L391.58 501.75 L392.66 500.17 L391.79 498.21 L394.32 496.57 L395.76 498.16 L397.64 497.81 L398.41 495.81 L401.36 496.44 L401.25 498.58 L402.83 499.66 L404.79 498.79 L406.43 501.32 L404.84 502.76Z" fill="#6b6b6b"/>
<circle cx="398" cy="505" r="4.1" fill="#e4e4e4"/>
<rect x="538.1" y="482" width="32" height="40" rx="2" fill="#4d4d4d"/>
<circle cx="545" cy="488" r="2" fill="#333"/><circle cx="563" cy="488" r="2" fill="#333"/>
<circle cx="554" cy="506" r="12.5" fill="#26262c"/><circle cx="554" cy="506" r="11.1" fill="#ffc107"/><circle cx="554" cy="506" r="4.9" fill="#444"/>
<rect x="690" y="482" width="40.1" height="40.1" rx="9.6" fill="#7a40b2"/>
<path d="M716.9 496.4 A9 9 0 1 1 706.3 507.7 A7.8 7.8 0 1 0 716.9 496.4 Z" fill="#fff"/>
<path d="M699.40 489.80 Q700.03 493.87 704.10 494.50 Q700.03 495.13 699.40 499.20 Q698.77 495.13 694.70 494.50 Q698.77 493.87 699.40 489.80 Z" fill="#fff"/>
<path d="M708.40 489.70 Q708.79 492.21 711.30 492.60 Q708.79 492.99 708.40 495.50 Q708.01 492.99 705.50 492.60 Q708.01 492.21 708.40 489.70 Z" fill="#fff"/>
<path d="M714.30 491.90 Q714.50 493.20 715.80 493.40 Q714.50 493.60 714.30 494.90 Q714.10 493.60 712.80 493.40 Q714.10 493.20 714.30 491.90 Z" fill="#fff"/>
<defs><clipPath id="cy"><path d="M370 330 L430 330 L430 359.2 L399 359.2 L399 349.2 L370 349.2 Z"/></clipPath></defs>
<circle cx="399" cy="354" r="17.9" fill="none" stroke="#cb9863" stroke-width="4"/>
<circle cx="399" cy="354" r="17.9" fill="none" stroke="#c6b164" stroke-width="4.2" clip-path="url(#cy)"/>
<circle cx="399" cy="354" r="16" fill="#3e5473"/>
<path d="M379.1 338.9 L379.1 349.2 L389.2 349.2 Z" fill="#c6b164"/>
<path d="M418.9 359.2 L418.9 369.3 L408.9 359.2 Z" fill="#cb9863"/>
<rect x="387.6" y="350.5" width="22.4" height="7.1" rx="3.55" fill="none" stroke="#cb9863" stroke-width="1.5"/>
<rect x="389.9" y="353" width="12" height="2.1" fill="#d3bf58"/>
</svg>
</body></html>
